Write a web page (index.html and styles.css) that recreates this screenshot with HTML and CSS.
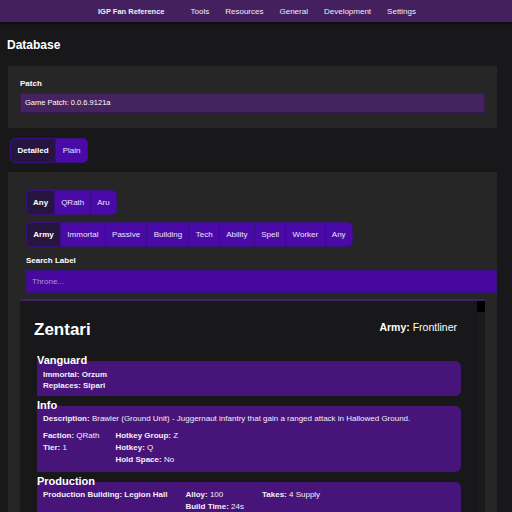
FILE: index.html
```html
<!DOCTYPE html>
<html lang="en">
<head>
<meta charset="utf-8">
<title>Database</title>
<link rel="stylesheet" href="styles.css">
</head>
<body>
<nav class="topbar">
  <span class="brand">IGP Fan Reference</span>
  <span class="nav-link">Tools</span>
  <span class="nav-link">Resources</span>
  <span class="nav-link">General</span>
  <span class="nav-link">Development</span>
  <span class="nav-link">Settings</span>
</nav>
<main class="page">
  <h1 class="page-title">Database</h1>
  <section class="card patch-card">
    <div class="field-label">Patch</div>
    <div class="select">Game Patch: 0.0.6.9121a</div>
  </section>
  <div class="btn-group mode-group">
    <button class="btn active">Detailed</button><button class="btn">Plain</button>
  </div>
  <section class="card db-card">
    <div class="filters">
      <div class="btn-group">
        <button class="btn active">Any</button><button class="btn">QRath</button><button class="btn">Aru</button>
      </div>
      <div class="btn-group wide">
        <button class="btn active">Army</button><button class="btn">Immortal</button><button class="btn">Passive</button><button class="btn">Building</button><button class="btn">Tech</button><button class="btn">Ability</button><button class="btn">Spell</button><button class="btn">Worker</button><button class="btn">Any</button>
      </div>
      <div class="field-label search-label">Search Label</div>
      <div class="search">Throne...</div>
    </div>
    <div class="results">
      <div class="results-content">
        <div class="entry-head">
          <h2 class="entry-name">Zentari</h2>
          <div class="entry-type"><b>Army:</b> Frontliner</div>
        </div>
        <div class="section first">
          <h3 class="section-title">Vanguard</h3>
          <div class="box">
            <div class="line"><b>Immortal: Orzum</b></div>
            <div class="line"><b>Replaces: Sipari</b></div>
          </div>
        </div>
        <div class="section">
          <h3 class="section-title">Info</h3>
          <div class="box">
            <div class="line"><b>Description:</b> Brawler (Ground Unit) - Juggernaut infantry that gain a ranged attack in Hallowed Ground.</div>
            <div class="cols">
              <div class="col">
                <div class="line"><b>Faction:</b> QRath</div>
                <div class="line"><b>Tier:</b> 1</div>
              </div>
              <div class="col">
                <div class="line"><b>Hotkey Group:</b> Z</div>
                <div class="line"><b>Hotkey:</b> Q</div>
                <div class="line"><b>Hold Space:</b> No</div>
              </div>
            </div>
          </div>
        </div>
        <div class="section">
          <h3 class="section-title">Production</h3>
          <div class="box">
            <div class="cols tight">
              <div class="col">
                <div class="line"><b>Production Building: Legion Hall</b></div>
              </div>
              <div class="col">
                <div class="line"><b>Alloy:</b> 100</div>
                <div class="line"><b>Build Time:</b> 24s</div>
              </div>
              <div class="col">
                <div class="line"><b>Takes:</b> 4 Supply</div>
              </div>
            </div>
          </div>
        </div>
      </div>
      <div class="scrollbar"><div class="thumb"></div></div>
    </div>
  </section>
</main>
</body>
</html>
```

FILE: styles.css
```css
html, body {
  margin: 0;
  height: 512px;
  overflow: hidden;
}
body {
  background: #18181a;
  color: #ffffff;
  font-family: "Liberation Sans", Arial, sans-serif;
}

.topbar {
  height: 22px;
  background: #44205f;
  display: flex;
  align-items: center;
  justify-content: center;
  gap: 16px;
  padding-left: 2px;
  font-size: 8px;
  color: #f2eef6;
  box-shadow: 0 1px 3px rgba(0, 0, 0, 0.7);
}
.brand {
  font-weight: bold;
  font-size: 7.5px;
  margin-right: 10px;
}

.page {
  padding: 0 15px 0 8px;
}
.page-title {
  font-size: 12px;
  line-height: 16px;
  margin: 15px 0 13px -1px;
}

.card {
  background: #262626;
}
.patch-card {
  padding: 13px 12px 15px;
}
.field-label {
  font-size: 8px;
  font-weight: bold;
  line-height: 10px;
  margin-bottom: 4px;
}
.select {
  height: 20px;
  box-sizing: border-box;
  background: #44235f;
  border: 1px solid #351a4d;
  padding: 0 4px;
  font-size: 7.5px;
  line-height: 18px;
}

.btn-group {
  display: flex;
  width: fit-content;
  border: 1px solid #36127a;
  border-radius: 5px;
  overflow: hidden;
  background: #4a0aa8;
}
.btn {
  font-family: inherit;
  font-size: 8px;
  color: #ebe3f7;
  background: #4a0aa8;
  border: 0;
  border-right: 1px solid #380c84;
  padding: 0 6px;
  height: 23px;
  margin: 0;
}
.btn:last-child {
  border-right: 0;
}
.btn.active {
  background: #26153f;
  font-weight: bold;
  color: #ffffff;
}
.btn-group.wide .btn {
  padding: 0 6.3px;
}
.mode-group {
  margin: 10px 0 9px 2px;
}
.mode-group .btn {
  padding: 0 6.5px;
}

.db-card {
  padding: 18px 12px 0;
}
.filters {
  display: flex;
  flex-direction: column;
  gap: 7px;
  margin: 0 -12px 6px 6px;
}
.search-label {
  margin: 2px 0 -3px;
}
.search {
  height: 23px;
  box-sizing: border-box;
  background: #46089f;
  border: 1px solid #35137a;
  padding: 0 5px;
  font-size: 8px;
  line-height: 21px;
  color: #a99bc6;
}

.results {
  display: flex;
  border-top: 2px solid #41215e;
  background: #18181a;
  height: 320px;
}
.results-content {
  flex: 1;
  padding: 19px 16px 0 14px;
}
.scrollbar {
  width: 8px;
  background: #1b1b1d;
}
.thumb {
  height: 11px;
  background: #000000;
}

.entry-head {
  display: flex;
  justify-content: space-between;
  align-items: flex-start;
}
.entry-name {
  font-size: 17px;
  line-height: 20px;
  margin: 0;
}
.entry-type {
  font-size: 10.5px;
  line-height: 12px;
  margin-top: 1px;
  padding-right: 4px;
}

.section {
  margin: 3px 0 0 3px;
}
.section.first {
  margin-top: 14px;
}
.section-title {
  font-size: 11px;
  line-height: 12px;
  margin: 0 0 -5px;
}
.box {
  background: #47157a;
  border-radius: 0 6px 6px 0;
  padding: 7px 6px 6px;
  font-size: 8px;
  line-height: 12px;
  color: #f3eef8;
}
.section.first .box {
  padding-top: 8px;
  padding-bottom: 5px;
  line-height: 11px;
}
.cols {
  display: flex;
  gap: 16px;
  margin-top: 5px;
}
.cols.tight {
  margin-top: 0;
  gap: 18px;
}
```
